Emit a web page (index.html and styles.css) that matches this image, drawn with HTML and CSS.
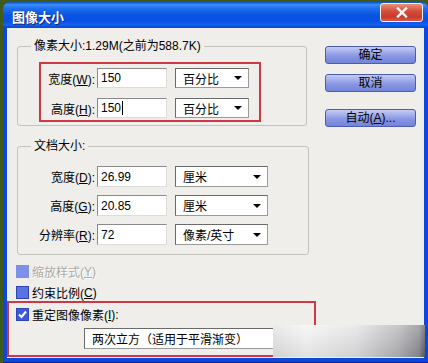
FILE: index.html
```html
<!DOCTYPE html>
<html lang="zh-CN">
<head>
    <meta charset="UTF-8">
    <title>图像大小</title>
    <link rel="stylesheet" href="styles.css">
</head>
<body>

    <div class="window">
        <div class="titlebar">
            <span class="title">图像大小</span>
            <span class="close">
                <svg width="12" height="11" viewBox="0 0 12 11">
                    <path d="M2 1.5 L10 9.5 M10 1.5 L2 9.5" stroke="#fff" stroke-width="2.4" stroke-linecap="square"/>
                </svg>
            </span>
        </div>

        <div class="client">
            <div class="main">
                <fieldset class="group group-pixel">
                    <legend>像素大小:1.29M(之前为588.7K)</legend>
                    <div class="mark mark-pixel">
                        <div class="row">
                            <label class="label">宽度(<u>W</u>):</label>
                            <div class="field">150</div>
                            <div class="drop">百分比</div>
                        </div>
                        <div class="row">
                            <label class="label">高度(<u>H</u>):</label>
                            <div class="field">150<span class="caret"></span></div>
                            <div class="drop">百分比</div>
                        </div>
                    </div>
                </fieldset>

                <fieldset class="group group-doc">
                    <legend>文档大小:</legend>
                    <div class="row">
                        <label class="label">宽度(<u>D</u>):</label>
                        <div class="field">26.99</div>
                        <div class="drop">厘米</div>
                    </div>
                    <div class="row">
                        <label class="label">高度(<u>G</u>):</label>
                        <div class="field">20.85</div>
                        <div class="drop">厘米</div>
                    </div>
                    <div class="row">
                        <label class="label">分辨率(<u>R</u>):</label>
                        <div class="field">72</div>
                        <div class="drop">像素/英寸</div>
                    </div>
                </fieldset>

                <div class="checks">
                    <div class="check disabled"><span class="box"></span>缩放样式(<u>Y</u>)</div>
                    <div class="check"><span class="box"></span>约束比例(<u>C</u>)</div>
                </div>

                <div class="mark mark-resample">
                    <div class="check"><span class="box checked">
                        <svg width="11" height="11" viewBox="0 0 11 11">
                            <path d="M2 5.5 L4.5 8 L9 2.5" stroke="#fff" stroke-width="2" fill="none"/>
                        </svg>
                    </span>重定图像像素(<u>I</u>):</div>
                    <div class="drop drop-wide">两次立方（适用于平滑渐变）</div>
                </div>
            </div>

            <div class="buttons">
                <button class="btn">确定</button>
                <button class="btn">取消</button>
                <button class="btn btn-auto">自动(<u>A</u>)...</button>
            </div>

            <div class="smudge"></div>
        </div>
    </div>

</body>
</html>
```

FILE: styles.css
```css
body {
    margin: 0;
    width: 428px;
    height: 363px;
    overflow: hidden;
    background-color: #3f5a1c;
    font-family: "Liberation Sans", "Noto Sans CJK SC", sans-serif;
    font-size: 12px;
    color: #000;
}
.window {
    margin: 2px 0 0 3px;
    width: 425px;
    height: 361px;
    display: flex;
    flex-direction: column;
    background-color: #0c48dc;
    border-bottom: 1px solid #06228a;
    border-radius: 7px 7px 0 0;
    box-sizing: border-box;
}
.titlebar {
    height: 26px;
    display: flex;
    justify-content: space-between;
    align-items: flex-start;
    padding: 0 5px 0 9px;
    border-radius: 7px 7px 0 0;
    background: linear-gradient(to bottom, #0a4fc8 0%, #3d8cf6 10%, #2070ee 24%, #0a56e2 48%, #0650e4 72%, #1462f0 88%, #0a44c8 100%);
}
.title {
    margin-top: 8px;
    color: #fff;
    font-weight: bold;
    font-size: 13px;
    line-height: 16px;
    text-shadow: 1px 1px 0 #0a2a7a;
}
.close {
    margin-top: 1px;
    width: 43px;
    height: 19px;
    box-sizing: border-box;
    display: flex;
    align-items: center;
    justify-content: center;
    border: 1px solid #f4f4f4;
    border-radius: 3px;
    background: linear-gradient(to bottom, #e8907c 0%, #d8503c 40%, #c83a2a 75%, #d85a48 100%);
}
.client {
    position: relative;
    flex: 1;
    display: flex;
    margin: 0 4px 4px 4px;
    background-color: #efeeea;
}
.main {
    width: 310px;
    padding-top: 11px;
}
.group {
    margin: 0 0 0 10px;
    padding: 0;
    border: 1px solid #c4c3bb;
    border-radius: 3px;
    min-width: 0;
    box-sizing: border-box;
}
.group legend {
    margin-left: 13px;
    padding: 0 3px;
    line-height: 14px;
}
.group-pixel {
    width: 290px;
    padding-bottom: 3px;
}
.group-doc {
    width: 292px;
    margin-top: 13px;
    padding: 13px 0 9px 0;
}
.mark {
    border: 2px solid #cc3844;
}
.mark-pixel {
    width: 222px;
    margin: 9px 0 0 21px;
    padding: 4px 0 2px 0;
    box-sizing: border-box;
}
.row {
    display: flex;
    align-items: center;
}
.label {
    text-align: right;
    margin-right: 2px;
    white-space: nowrap;
}
.field {
    width: 70px;
    padding-left: 3px;
    box-sizing: border-box;
    background-color: #fff;
    border: 1px solid;
    border-color: #8a8a8a #dcdcdc #dcdcdc #8a8a8a;
    display: flex;
    align-items: center;
}
.caret {
    width: 1px;
    height: 14px;
    margin-left: 1px;
    background-color: #000;
}
.drop {
    margin-left: 8px;
    padding: 0 6px 0 7px;
    box-sizing: border-box;
    background-color: #fff;
    border: 1px solid;
    border-color: #6a6a6a #9a9a9a #9a9a9a #6a6a6a;
    display: flex;
    align-items: center;
    justify-content: space-between;
    white-space: nowrap;
}
.drop::after {
    content: "";
    border-left: 4px solid transparent;
    border-right: 4px solid transparent;
    border-top: 4px solid #000;
}
.mark-pixel .row + .row {
    margin-top: 10px;
}
.mark-pixel .label {
    width: 54px;
}
.mark-pixel .field,
.mark-pixel .drop {
    height: 20px;
}
.mark-pixel .drop {
    width: 74px;
}
.group-doc .row + .row {
    margin-top: 8px;
}
.group-doc .label {
    width: 77px;
}
.group-doc .field,
.group-doc .drop {
    height: 21px;
}
.group-doc .drop {
    width: 93px;
}
.checks {
    margin-top: 10px;
    padding-left: 9px;
}
.check {
    display: flex;
    align-items: center;
    height: 13px;
    white-space: nowrap;
}
.checks .check + .check {
    margin-top: 8px;
}
.box {
    width: 13px;
    height: 13px;
    margin-right: 3px;
    box-sizing: border-box;
    border: 1px solid #2c44b4;
    background-color: #5a72e4;
    display: flex;
    align-items: center;
    justify-content: center;
}
.disabled {
    color: #a9a9a9;
    text-shadow: 1px 1px 0 #fff;
}
.disabled .box {
    border-color: #7c90e6;
    background-color: #7d90ea;
}
.box.checked {
    background-color: #3c5ade;
}
.mark-resample {
    width: 309px;
    margin-top: 2px;
    padding: 5px 0 6px 7px;
    box-sizing: border-box;
}
.drop-wide {
    width: 216px;
    height: 21px;
    margin: 7px 0 0 68px;
}
.buttons {
    width: 91px;
    margin-left: 8px;
    padding-top: 18px;
    display: flex;
    flex-direction: column;
}
.btn {
    height: 18px;
    padding: 0;
    font-family: inherit;
    font-size: 12px;
    line-height: 16px;
    color: #000;
    border: 1px solid #4c5cae;
    border-radius: 3px;
    background: linear-gradient(to bottom, #c4ccf4 0%, #9aa6ea 40%, #8694e2 60%, #7584d8 100%);
    cursor: pointer;
}
.btn + .btn {
    margin-top: 10px;
}
.btn-auto {
    margin-top: 17px !important;
}
.smudge {
    position: absolute;
    left: 266px;
    top: 297px;
    width: 152px;
    height: 32px;
    background:
        linear-gradient(to bottom, rgba(255, 255, 255, 0.25), rgba(0, 0, 0, 0.08)),
        linear-gradient(to right, #e4e4e6 0%, #f5f5f5 22%, #e2e2e4 55%, #b6b6ba 82%, #8c8c92 96%, #5c5c62 100%);
}
```
